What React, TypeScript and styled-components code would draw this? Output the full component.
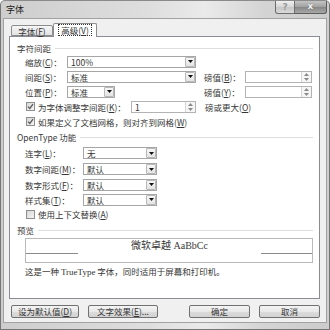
import React from 'react';
import styled, { createGlobalStyle } from 'styled-components';

const GlobalStyle = createGlobalStyle`
  html, body { margin: 0; padding: 0; background: #fff; }
  body {
    font-family: "Noto Sans CJK SC", "Noto Sans", sans-serif;
    font-size: 8.5px;
    color: #363636;
  }
`;

const Key = styled.span`
  text-decoration: underline;
`;

const Arrow: React.FC<{ up?: boolean; color?: string }> = ({ up, color = '#111' }) => (
  <svg width="5" height="3" viewBox="0 0 5 3">
    <path d={up ? 'M0 3 L2.5 0 L5 3 Z' : 'M0 0 L5 0 L2.5 3 Z'} fill={color} />
  </svg>
);

const Select: React.FC<{ w: number; value: string }> = ({ w, value }) => (
  <SelectBox $w={w}>
    <SelectValue>{value}</SelectValue>
    <DropButton>
      <Arrow />
    </DropButton>
  </SelectBox>
);

const Spin: React.FC<{ w: number; value?: string }> = ({ w, value }) => (
  <SpinBox $w={w}>
    <SelectValue>{value}</SelectValue>
    <SpinButtons>
      <SpinHalf>
        <Arrow up color="#8a8a8a" />
      </SpinHalf>
      <SpinHalf>
        <Arrow color="#8a8a8a" />
      </SpinHalf>
    </SpinButtons>
  </SpinBox>
);

const CheckBox: React.FC<{ checked?: boolean }> = ({ checked }) => (
  <Check>
    {checked && (
      <svg width="7" height="7" viewBox="0 0 7 7">
        <path d="M1 3.6 L2.8 5.4 L6 1.2" stroke="#5a5a5a" strokeWidth="1.3" fill="none" />
      </svg>
    )}
  </Check>
);

const App: React.FC = () => {
  return (
    <>
      <GlobalStyle />
      <Window>
        <TitleBar>
          <Title>字体</Title>
          <Controls>
            <HelpButton>?</HelpButton>
            <CloseButton>x</CloseButton>
          </Controls>
        </TitleBar>
        <Body>
          <TabRow>
            <Tab>
              字体(<Key>F</Key>)
            </Tab>
            <Tab $active>
              <Focus>
                高级(<Key>V</Key>)
              </Focus>
            </Tab>
          </TabRow>
          <Panel>
            <SectionHeader>
              <span>字符间距</span>
              <Rule />
            </SectionHeader>
            <Rows>
              <Row $h={15}>
                <Label $w={42}>
                  缩放(<Key>C</Key>)：
                </Label>
                <Select w={129} value="100%" />
              </Row>
              <Row $h={15}>
                <Label $w={42}>
                  间距(<Key>S</Key>)：
                </Label>
                <Cell>
                  <Select w={129} value="标准" />
                </Cell>
                <Label $w={41}>
                  磅值(<Key>B</Key>)：
                </Label>
                <Spin w={67} />
              </Row>
              <Row $h={15}>
                <Label $w={42}>
                  位置(<Key>P</Key>)：
                </Label>
                <Cell>
                  <Select w={48} value="标准" />
                </Cell>
                <Label $w={41}>
                  磅值(<Key>Y</Key>)：
                </Label>
                <Spin w={67} />
              </Row>
              <Row $h={15}>
                <CheckBox checked />
                <CheckText $w={93}>
                  为字体调整字间距(<Key>K</Key>)：
                </CheckText>
                <Spin w={65} value="1" />
                <Trailing>
                  磅或更大(<Key>O</Key>)
                </Trailing>
              </Row>
              <Row $h={15}>
                <CheckBox checked />
                <CheckText>
                  如果定义了文档网格，则对齐到网格(<Key>W</Key>)
                </CheckText>
              </Row>
            </Rows>

            <SectionHeader $top={2}>
              <span>OpenType 功能</span>
              <Rule />
            </SectionHeader>
            <Rows $top={2}>
              <Row $h={16}>
                <Label $w={58}>
                  连字(<Key>L</Key>)：
                </Label>
                <Select w={74} value="无" />
              </Row>
              <Row $h={16}>
                <Label $w={58}>
                  数字间距(<Key>M</Key>)：
                </Label>
                <Select w={74} value="默认" />
              </Row>
              <Row $h={15}>
                <Label $w={58}>
                  数字形式(<Key>F</Key>)：
                </Label>
                <Select w={74} value="默认" />
              </Row>
              <Row $h={15}>
                <Label $w={58}>
                  样式集(<Key>T</Key>)：
                </Label>
                <Select w={74} value="默认" />
              </Row>
              <Row $h={14}>
                <CheckBox />
                <CheckText>
                  使用上下文替换(<Key>A</Key>)
                </CheckText>
              </Row>
            </Rows>

            <SectionHeader $top={3}>
              <span>预览</span>
              <Rule />
            </SectionHeader>
            <PreviewBox>
              <BaseLine $w={52} />
              <PreviewText>微软卓越 AaBbCc</PreviewText>
              <BaseLine $w={51} />
            </PreviewBox>
            <Description>
              这是一种 <Latin>TrueType</Latin> 字体，同时适用于屏幕和打印机。
            </Description>
          </Panel>
          <ButtonRow>
            <Button $w={68}>
              设为默认值(<Key>D</Key>)
            </Button>
            <Button $w={70}>
              文字效果(<Key>E</Key>)...
            </Button>
            <Spacer />
            <Button $w={61}>确定</Button>
            <Button $w={61}>取消</Button>
          </ButtonRow>
        </Body>
      </Window>
    </>
  );
};

export default App;

const Window = styled.div`
  width: 330px;
  height: 330px;
  box-sizing: border-box;
  display: flex;
  flex-direction: column;
  border: 1px solid #767676;
  border-top-color: #8a8a8a;
  border-radius: 5px 5px 0 0;
  padding: 0 2px 6px;
  background: linear-gradient(to right, #cdcdcd 0%, #dedede 45%, #eaeaea 62%, #d4d4d4 80%, #cccccc 100%);
`;

const TitleBar = styled.div`
  height: 17px;
  display: flex;
  align-items: flex-start;
`;

const Title = styled.div`
  margin-left: 3px;
  line-height: 18px;
  font-size: 9px;
  color: #1a1a1a;
`;

const Controls = styled.div`
  margin-left: auto;
  display: flex;
`;

const HelpButton = styled.div`
  width: 20px;
  height: 13px;
  box-sizing: border-box;
  border: 1px solid #6e6e6e;
  border-top: none;
  border-radius: 0 0 0 3px;
  background: linear-gradient(#f0f0f0, #d6d6d6 50%, #c6c6c6 51%, #dadada);
  color: #9a9a9a;
  font-family: "DejaVu Sans", sans-serif;
  font-weight: bold;
  font-size: 9px;
  line-height: 12px;
  text-align: center;
`;

const CloseButton = styled.div`
  width: 32px;
  height: 13px;
  box-sizing: border-box;
  border: 1px solid #5c5c5c;
  border-top: none;
  border-left: none;
  border-radius: 0 0 3px 0;
  background: linear-gradient(#c4c4c4, #a0a0a0 50%, #868686 51%, #a8a8a8);
  color: #f4f4f4;
  font-family: "DejaVu Sans", sans-serif;
  font-weight: bold;
  font-size: 9px;
  line-height: 11px;
  text-align: center;
  text-shadow: 0 0 1px #444;
`;

const Body = styled.div`
  flex: 1;
  display: flex;
  flex-direction: column;
  background: #f0f0f0;
  border: 1px solid #a2a2a2;
  padding: 4px 6px 4px 5px;
`;

const TabRow = styled.div`
  height: 14px;
  display: flex;
  align-items: flex-start;
  padding-left: 2px;
`;

const Tab = styled.div<{ $active?: boolean }>`
  position: relative;
  z-index: 1;
  box-sizing: border-box;
  width: ${(p) => (p.$active ? 44 : 42)}px;
  height: ${(p) => (p.$active ? 14 : 11)}px;
  margin-top: ${(p) => (p.$active ? 0 : 2)}px;
  border: 1px solid #8d8d8d;
  border-bottom: ${(p) => (p.$active ? 'none' : '1px solid #8d8d8d')};
  border-radius: 2px 2px 0 0;
  background: ${(p) => (p.$active ? '#fff' : 'linear-gradient(#f6f6f6, #e2e2e2)')};
  display: flex;
  justify-content: center;
  align-items: ${(p) => (p.$active ? 'flex-start' : 'center')};
  padding-top: ${(p) => (p.$active ? 1 : 0)}px;
  line-height: 10px;
`;

const Focus = styled.span`
  outline: 1px dotted #333;
  padding: 0 2px;
  line-height: 10px;
`;

const Panel = styled.div`
  flex: 1;
  margin-top: -1px;
  display: flex;
  flex-direction: column;
  background: #fff;
  border: 1px solid #898c95;
  padding: 5px 6px 0 7px;
`;

const SectionHeader = styled.div<{ $top?: number }>`
  height: 12px;
  margin-top: ${(p) => p.$top ?? 0}px;
  display: flex;
  align-items: center;
  color: #3a3a3a;
  white-space: nowrap;
`;

const Rule = styled.div`
  flex: 1;
  margin-left: 4px;
  border-top: 1px solid #dedede;
`;

const Rows = styled.div<{ $top?: number }>`
  margin-top: ${(p) => p.$top ?? 0}px;
  padding-left: 8px;
  display: flex;
  flex-direction: column;
`;

const Row = styled.div<{ $h: number }>`
  height: ${(p) => p.$h}px;
  display: flex;
  align-items: center;
  white-space: nowrap;
`;

const Label = styled.div<{ $w: number }>`
  width: ${(p) => p.$w}px;
  flex: none;
`;

const Cell = styled.div`
  width: 129px;
  margin-right: 8px;
  flex: none;
`;

const SelectBox = styled.div<{ $w: number }>`
  width: ${(p) => p.$w}px;
  height: 12px;
  box-sizing: border-box;
  border: 1px solid #a6a6a6;
  background: #fff;
  display: flex;
  flex: none;
`;

const SelectValue = styled.div`
  flex: 1;
  padding-left: 3px;
  line-height: 10px;
  overflow: hidden;
`;

const DropButton = styled.div`
  width: 10px;
  box-sizing: border-box;
  border: 1px solid #b8b8b8;
  border-radius: 1px;
  background: linear-gradient(#f6f6f6, #e4e4e4);
  display: flex;
  align-items: center;
  justify-content: center;
`;

const SpinBox = styled.div<{ $w: number }>`
  width: ${(p) => p.$w}px;
  height: 12px;
  box-sizing: border-box;
  border: 1px solid #b3b3b3;
  background: #fff;
  display: flex;
  flex: none;
`;

const SpinButtons = styled.div`
  width: 9px;
  display: flex;
  flex-direction: column;
  border-left: 1px solid #d6d6d6;
  background: #f6f6f6;
`;

const SpinHalf = styled.div`
  flex: 1;
  display: flex;
  align-items: center;
  justify-content: center;
`;

const Check = styled.span`
  width: 9px;
  height: 9px;
  margin-left: 1px;
  box-sizing: border-box;
  border: 1px solid #8e8f8f;
  background: linear-gradient(135deg, #d8d8d8, #f4f4f4);
  display: inline-flex;
  align-items: center;
  justify-content: center;
  flex: none;
`;

const CheckText = styled.span<{ $w?: number }>`
  margin-left: 3px;
  width: ${(p) => (p.$w ? `${p.$w}px` : 'auto')};
  flex: none;
`;

const Trailing = styled.span`
  margin-left: 9px;
`;

const PreviewBox = styled.div`
  margin: 2px 0 0 8px;
  height: 25px;
  box-sizing: border-box;
  border: 1px solid #b9b9b9;
  display: flex;
  align-items: flex-start;
`;

const BaseLine = styled.div<{ $w: number }>`
  width: ${(p) => p.$w}px;
  height: 1px;
  margin-top: 14px;
  background: #8a8a8a;
  flex: none;
`;

const PreviewText = styled.div`
  flex: 1;
  text-align: center;
  font-family: "Liberation Serif", "Noto Sans CJK SC", serif;
  font-size: 10px;
  line-height: 14px;
  color: #3a3a3a;
`;

const Description = styled.div`
  margin: 2px 0 0 8px;
  line-height: 12px;
  white-space: nowrap;
`;

const Latin = styled.span`
  font-family: "Liberation Serif", serif;
  font-size: 9px;
`;

const ButtonRow = styled.div`
  margin-top: 6px;
  height: 13px;
  display: flex;
  gap: 9px;
  padding-left: 2px;
`;

const Spacer = styled.div`
  flex: 1;
`;

const Button = styled.div<{ $w: number }>`
  width: ${(p) => p.$w}px;
  height: 13px;
  box-sizing: border-box;
  border: 1px solid #707070;
  border-radius: 2px;
  background: linear-gradient(#f4f4f4, #e8e8e8 50%, #dcdcdc 51%, #d2d2d2);
  display: flex;
  align-items: center;
  justify-content: center;
  line-height: 11px;
  white-space: nowrap;
`;
